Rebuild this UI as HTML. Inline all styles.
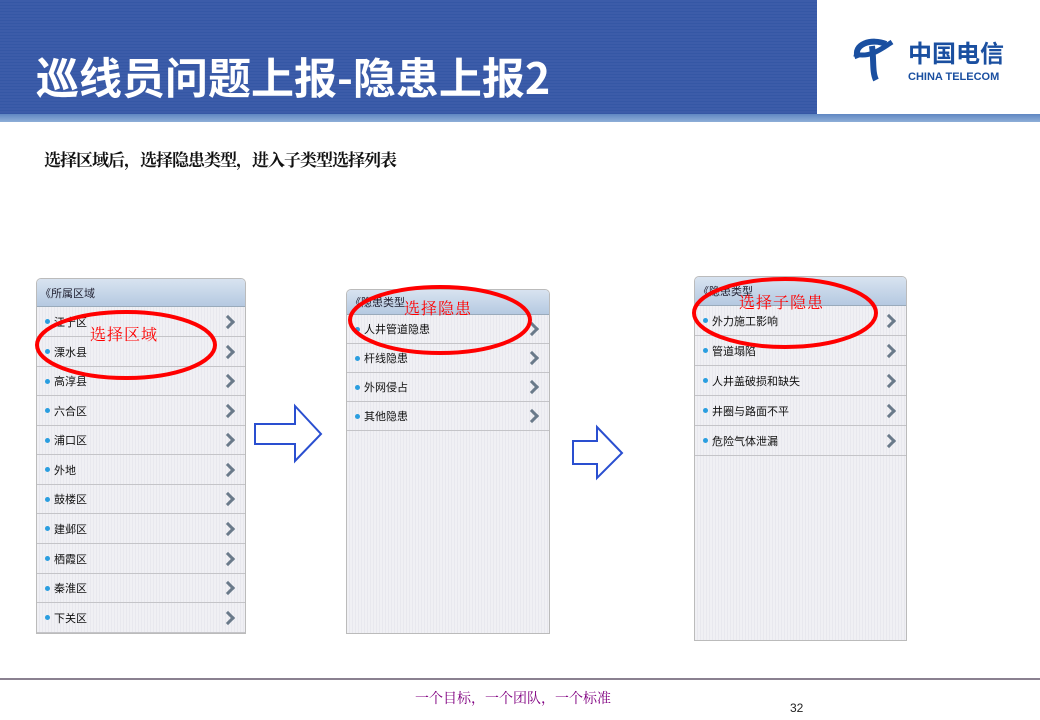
<!DOCTYPE html>
<html><head><meta charset="utf-8"><style>
*{margin:0;padding:0;box-sizing:border-box}
body{width:1040px;height:720px;background:#fff;position:relative;overflow:hidden;font-family:"Liberation Sans","Noto Sans CJK SC",sans-serif}
.hdr{position:absolute;left:0;top:0;width:817px;height:114px;background:repeating-linear-gradient(#3c5ca9 0 2px,#3557a5 2px 3px)}
.band{position:absolute;left:0;top:114px;width:1040px;height:8px;background:linear-gradient(#5f86c2,#8eaed8)}
.title{position:absolute;left:36px;top:50px;color:#fff;font-size:43px;font-weight:bold;letter-spacing:0px;font-family:"Noto Sans CJK SC",sans-serif;line-height:52px}
.sub{position:absolute;left:44px;top:146px;font-size:17px;color:#111;font-family:"Noto Serif CJK SC",serif;letter-spacing:-1px;font-weight:bold}
.ph{position:absolute;background:repeating-linear-gradient(90deg,#f0f0f4 0 2px,#e8e8ee 2px 3px);border:1px solid #bbb;border-radius:5px 5px 0 0;overflow:hidden}
.ph .h{position:absolute;left:0;top:0;right:0;background:linear-gradient(#d8e3f0,#b5c9e1);font-size:11px;color:#223;padding-left:3px;display:flex;align-items:center;border-bottom:1px solid #9ab}
.r{position:absolute;left:0;right:0;border-bottom:1px solid #c4c4c8;font-size:11px;color:#111;display:flex;align-items:center;padding-left:8px}
.r:before{content:"";width:5px;height:5px;border-radius:50%;background:#2a9ee0;margin-right:4px}
.r:after{content:"";position:absolute;right:12px;width:7px;height:7px;border-right:3px solid #6a7a8a;border-top:3px solid #6a7a8a;transform:rotate(45deg)}
.red{position:absolute;color:#f00;font-size:16px;font-family:"Noto Serif CJK SC",serif;letter-spacing:1px}
.foot{position:absolute;left:0;top:678px;width:1040px;height:2px;background:#8a8090}
</style></head><body>
<div class="hdr"></div><div class="band"></div>
<div class="title">巡线员问题上报-隐患上报2</div>
<svg style="position:absolute;left:850px;top:36px" width="170" height="50">
<path d="M8 22 C2 8 22 2 36 8" stroke="#1a4fa0" stroke-width="6" fill="none"/>
<path d="M4 18 C20 22 30 14 42 6" stroke="#1a4fa0" stroke-width="5" fill="none"/>
<path d="M22 10 C24 24 22 36 26 44" stroke="#1a4fa0" stroke-width="6" fill="none"/>
<text x="58" y="26" fill="#1a4fa0" font-size="24" font-weight="bold" font-family="Noto Sans CJK SC">中国电信</text>
<text x="58" y="44" fill="#1a4fa0" font-size="11" font-weight="bold" font-family="Liberation Sans">CHINA TELECOM</text>
</svg>
<div class="sub">选择区域后，选择隐患类型，进入子类型选择列表</div>

<div class="ph" style="left:36px;top:278px;width:210px;height:356px">
<div class="h" style="height:28px">《所属区域</div>
<div class="r" style="top:28px;height:30px">江宁区</div>
<div class="r" style="top:58px;height:30px">溧水县</div>
<div class="r" style="top:88px;height:29px">高淳县</div>
<div class="r" style="top:117px;height:30px">六合区</div>
<div class="r" style="top:147px;height:29px">浦口区</div>
<div class="r" style="top:176px;height:30px">外地</div>
<div class="r" style="top:206px;height:29px">鼓楼区</div>
<div class="r" style="top:235px;height:30px">建邺区</div>
<div class="r" style="top:265px;height:30px">栖霞区</div>
<div class="r" style="top:295px;height:29px">秦淮区</div>
<div class="r" style="top:324px;height:30px">下关区</div>
</div>

<div class="ph" style="left:346px;top:289px;width:204px;height:345px">
<div class="h" style="height:25px">《隐患类型</div>
<div class="r" style="top:25px;height:29px">人井管道隐患</div>
<div class="r" style="top:54px;height:29px">杆线隐患</div>
<div class="r" style="top:83px;height:29px">外网侵占</div>
<div class="r" style="top:112px;height:29px">其他隐患</div>
</div>

<div class="ph" style="left:694px;top:276px;width:213px;height:365px">
<div class="h" style="height:29px">《隐患类型</div>
<div class="r" style="top:29px;height:30px">外力施工影响</div>
<div class="r" style="top:59px;height:30px">管道塌陷</div>
<div class="r" style="top:89px;height:30px">人井盖破损和缺失</div>
<div class="r" style="top:119px;height:30px">井圈与路面不平</div>
<div class="r" style="top:149px;height:30px">危险气体泄漏</div>
</div>

<svg style="position:absolute;left:0;top:0" width="1040" height="720">
<ellipse cx="126" cy="345" rx="89" ry="33" fill="none" stroke="#f00" stroke-width="4"/>
<ellipse cx="440" cy="320" rx="90" ry="33" fill="none" stroke="#f00" stroke-width="4"/>
<ellipse cx="785" cy="313" rx="91" ry="34" fill="none" stroke="#f00" stroke-width="4"/>
<path d="M255 424 H295 V406 L321 434 L295 461 V444 H255 Z" fill="#fff" stroke="#2a4fd0" stroke-width="2"/>
<path d="M573 441 H597 V427 L622 453 L597 478 V464 H573 Z" fill="#fff" stroke="#2a4fd0" stroke-width="2"/>
</svg>
<div class="red" style="left:90px;top:322px">选择区域</div>
<div class="red" style="left:404px;top:296px">选择隐患</div>
<div class="red" style="left:739px;top:290px">选择子隐患</div>

<div class="foot"></div>
<div style="position:absolute;left:415px;top:688px;font-size:14px;color:#800080;font-family:'Noto Serif CJK SC',serif">一个目标，一个团队，一个标准</div>
<div style="position:absolute;left:790px;top:701px;font-size:12px;color:#222">32</div>
</body></html>
